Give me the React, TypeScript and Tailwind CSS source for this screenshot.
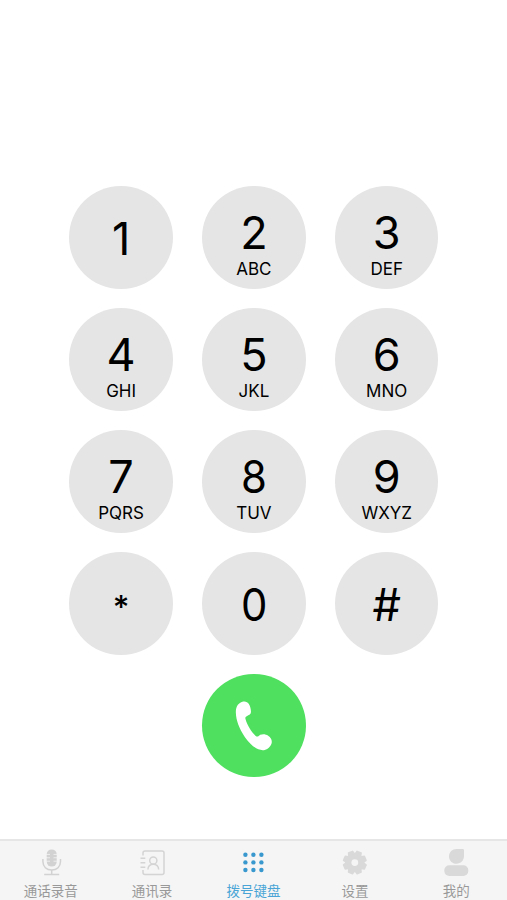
import { useState } from 'react';
import type { ReactNode } from 'react';

interface DialKey {
  digit: string;
  letters?: string;
}

interface Tab {
  id: string;
  label: string;
  icon: ReactNode;
}

const KEYS: DialKey[] = [
  { digit: '1' },
  { digit: '2', letters: 'ABC' },
  { digit: '3', letters: 'DEF' },
  { digit: '4', letters: 'GHI' },
  { digit: '5', letters: 'JKL' },
  { digit: '6', letters: 'MNO' },
  { digit: '7', letters: 'PQRS' },
  { digit: '8', letters: 'TUV' },
  { digit: '9', letters: 'WXYZ' },
  { digit: '*' },
  { digit: '0' },
  { digit: '#' },
];

function MicIcon() {
  return (
    <svg width="28" height="28" viewBox="0 0 28 28" fill="none">
      <rect x="9.7" y="1.4" width="10" height="17.2" rx="5" fill="#d2d2d2" />
      <path d="M9 6.400h4M9 9.800h4M9 13.200h4M16.500 6.400h4M16.500 9.800h4M16.500 13.200h4" stroke="#f5f5f5" strokeWidth="0.8" />
      <path d="M5.900 11v2.600c0 5 3.600 8.400 8.800 8.400s8.800-3.400 8.800-8.400V11" stroke="#d2d2d2" strokeWidth="1.500" />
      <path d="M14.700 22v4M7.200 26.600h15" stroke="#d2d2d2" strokeWidth="1.500" />
    </svg>
  );
}

function ContactsIcon() {
  return (
    <svg width="28" height="28" viewBox="0 0 28 28" fill="none" stroke="#d4d4d4" strokeWidth="1.500">
      <path d="M5 7.500V5c0-1.200.8-2 2-2h17c1.200 0 2 .8 2 2v19.500c0 1.200-.8 2-2 2H7c-1.200 0-2-.8-2-2V22" />
      <path d="M2.500 10.300h4.800M2.500 14.800h4.800M2.500 19.300h4.800" />
      <circle cx="15.300" cy="12.500" r="3.600" />
      <path d="M9.900 21.500c.2-3.200 2.300-5.300 5.400-5.300s5.200 2.100 5.400 5.300" />
    </svg>
  );
}

function KeypadIcon() {
  return (
    <svg width="28" height="28" viewBox="0 0 28 28" fill="#3999cf">
      {[6.8, 14.4, 22].map((cy) =>
        [6.4, 14.4, 22.4].map((cx) => <circle key={`${cx}-${cy}`} cx={cx} cy={cy} r="2.2" />)
      )}
    </svg>
  );
}

function GearIcon() {
  return (
    <svg width="28" height="28" viewBox="0 0 28 28" fill="#d9d9d9">
      <g transform="translate(13.800 14.600)">
        {[0, 45, 90, 135, 180, 225, 270, 315].map((angle) => (
          <path
            key={angle}
            transform={`rotate(${angle + 22.5})`}
            d="M-4 -7L-2.900 -11.500Q-2.700 -12 -2.200 -12H2.200Q2.700 -12 2.900 -11.500L4 -7Z"
          />
        ))}
        <circle r="9.500" />
        <circle r="3.400" fill="#f5f5f5" />
      </g>
    </svg>
  );
}

function ProfileIcon() {
  return (
    <svg width="28" height="28" viewBox="0 0 28 28" fill="#d9d9d9">
      <path d="M14.500 1.100h6c1 0 1.500.5 1.500 1.500v5.500c0 4.500-3.200 7.600-7.500 7.600S7 12.500 7 8.400s3.300-7.300 7.500-7.300z" />
      <rect x="2.300" y="17.200" width="24" height="10.800" rx="5" />
    </svg>
  );
}

const TABS: Tab[] = [
  { id: 'recordings', label: '通话录音', icon: <MicIcon /> },
  { id: 'contacts', label: '通讯录', icon: <ContactsIcon /> },
  { id: 'keypad', label: '拨号键盘', icon: <KeypadIcon /> },
  { id: 'settings', label: '设置', icon: <GearIcon /> },
  { id: 'profile', label: '我的', icon: <ProfileIcon /> },
];

// The star and the zero are drawn a little smaller than the other digits
function digitStyle(digit: string) {
  if (digit === '*') return 'pt-[3px] text-[32px] font-medium';
  if (digit === '0' || digit === '8') return 'scale-x-[0.93] text-[45px]';
  return 'text-[45px]';
}

function KeyButton({ digit, letters }: DialKey) {
  return (
    <button
      className={`flex h-[103.5px] w-[103.5px] flex-col items-center rounded-full bg-[#e5e5e5] text-black ${
        letters ? 'pt-[24.5px]' : 'pt-[30px]'
      }`}
    >
      <span className={`leading-[45px] ${digitStyle(digit)}`}>{digit}</span>
      {letters && <span className="mt-1 text-[17px] leading-5">{letters}</span>}
    </button>
  );
}

export default function App() {
  const [activeTab, setActiveTab] = useState('keypad');

  return (
    <div className="flex h-[900px] w-[507px] flex-col overflow-hidden bg-white font-['Inter','Noto_Sans_CJK_SC',sans-serif]">
      {/* Keypad */}
      <main className="flex flex-1 flex-col items-center pt-[185.8px] pl-[0.8px]">
        <div className="grid grid-cols-3 gap-x-[29.3px] gap-y-[18.5px]">
          {KEYS.map((key) => (
            <KeyButton key={key.digit} {...key} />
          ))}
        </div>

        {/* Call button */}
        <button className="mt-[18.5px] flex h-[103.5px] w-[103.5px] items-center justify-center rounded-full bg-[#4fe060]">
          <svg width="104" height="104" viewBox="0 0 104 104" fill="white">
            <path d="M34 38C34 32 37 28.500 41.500 27.500C46 26.800 49 31 49.200 37.500C49.200 39.800 48.300 40.500 46.500 41.300L44.200 42.600C43.400 43.200 43.500 44 43.700 45C45.500 51.500 49.500 57.800 54 62C55 62.900 56 62.800 57 62L58.500 60.900C61 59.700 64 60 66.500 61.700C69.500 63.800 70.700 66.500 69.900 69.500C68.500 73.500 64.500 76.300 61 76.300C55 76 48.500 71 43 63C37.500 55 34 46 34 38Z" />
          </svg>
        </button>
      </main>

      {/* Tab bar */}
      <nav className="grid h-[61px] grid-cols-5 border-t-2 border-[#e6e6e6] bg-[#f5f5f5]">
        {TABS.map((tab) => (
          <button
            key={tab.id}
            onClick={() => setActiveTab(tab.id)}
            className={`flex flex-col items-center pt-[7px] text-[13.5px] leading-5 ${
              activeTab === tab.id ? 'text-[#4aa5d6]' : 'text-[#999999]'
            }`}
          >
            {tab.icon}
            <span className="mt-[5px] whitespace-nowrap">{tab.label}</span>
          </button>
        ))}
      </nav>
    </div>
  );
}
